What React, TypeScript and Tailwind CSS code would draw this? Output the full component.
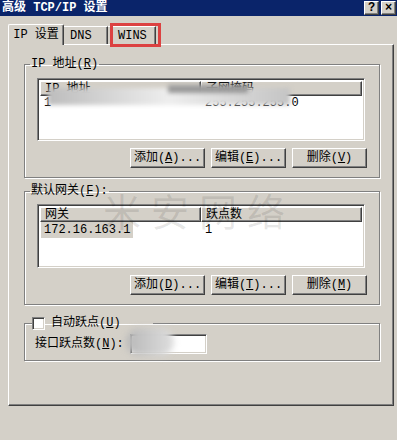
import React from 'react';

const raised =
  'border border-t-white border-l-white border-r-[#404040] border-b-[#404040] shadow-[inset_-1px_-1px_0_#808080]';
const sunken =
  'border border-t-[#808080] border-l-[#808080] border-r-white border-b-white shadow-[inset_1px_1px_0_#404040,inset_-1px_-1px_0_#d4d0c8]';
const etched = 'border border-[#808080] shadow-[inset_1px_1px_0_#ffffff,1px_1px_0_#ffffff]';

const Btn = ({ label, hot, dots }: { label: string; hot: string; dots?: boolean }) => (
  <button className={`${raised} w-[75px] h-[20px] bg-[#d4d0c8] flex items-center justify-center text-[12px] leading-none text-black`}>
    {label}(<span className="underline">{hot}</span>){dots ? '...' : ''}
  </button>
);

const HeaderCell = ({ children, grow }: { children: React.ReactNode; grow?: boolean }) => (
  <div className={`${raised} h-[15px] bg-[#d4d0c8] flex items-center pl-[4px] text-[12px] leading-none ${grow ? 'flex-1' : 'w-[161px]'}`}>
    {children}
  </div>
);

const App: React.FC = () => {
  return (
    <div className="relative w-[397px] h-[440px] overflow-hidden bg-[#d4d0c8] text-black font-['Liberation_Mono','Noto_Sans_CJK_SC',monospace]">
      {/* Title bar */}
      <div className="h-[16px] bg-[#0a246a] flex items-center justify-between pl-[2px] pr-[1px]">
        <span className="text-white font-bold text-[12px] leading-none">高级 TCP/IP 设置</span>
        <div className="flex gap-[2px]">
          <div className={`${raised} w-[15px] h-[14px] bg-[#d4d0c8] flex items-center justify-center text-[12px] font-bold leading-none`}>?</div>
          <div className={`${raised} w-[15px] h-[14px] bg-[#d4d0c8] flex items-center justify-center text-[12px] font-bold leading-none`}>×</div>
        </div>
      </div>

      {/* Tabs */}
      <div className="flex items-end pl-[8px] pt-[7px] h-[28px]">
        <div className="relative z-10 -mb-px h-[21px] w-[56px] bg-[#d4d0c8] border-t border-l border-t-white border-l-white border-r border-r-[#404040] shadow-[inset_-1px_0_0_#808080] rounded-t-[2px] flex items-center justify-center text-[12px] leading-none">
          IP 设置
        </div>
        <div className="h-[18px] w-[44px] border-t border-t-white border-r border-r-[#404040] shadow-[inset_-1px_0_0_#808080] flex items-center pl-[6px] text-[12px] leading-none">
          DNS
        </div>
        <div className="h-[18px] w-[48px] border-t border-t-white border-r border-r-[#404040] shadow-[inset_-1px_0_0_#808080] flex items-center pl-[10px] text-[12px] leading-none">
          WINS
        </div>
      </div>

      {/* Panel */}
      <div className={`${raised} ml-[8px] w-[386px] h-[362px] px-[15px]`}>
        {/* IP address group */}
        <fieldset className={`${etched} mt-[12px] w-[356px] p-0`}>
          <legend className="ml-[5px] px-[1px] h-[14px] text-[12px] leading-[14px]">
            IP 地址(<span className="underline">R</span>)
          </legend>
          <div className="pl-[12px] pr-[14px] pt-[7px] pb-[9px]">
            <div className={`${sunken} relative h-[63px] bg-white p-[2px]`}>
              <div className="flex">
                <HeaderCell>IP 地址</HeaderCell>
                <HeaderCell grow>子网掩码</HeaderCell>
              </div>
              <div className="flex h-[14px] items-center text-[12px] leading-none">
                <span className="w-[161px] pl-[4px]">1</span>
                <span className="pl-[4px]">255.255.255.0</span>
              </div>
              <div className="absolute left-[10px] top-[9px] w-[242px] h-[17px] bg-gradient-to-r from-[#bdbdbd] via-[#eeeeee] to-[#c4c4c4] blur-[2px]" />
              <div className="absolute left-[130px] top-[6px] w-[80px] h-[8px] bg-[#9a9a9a] blur-[2px]" />
            </div>
            <div className="mt-[7px] flex justify-end gap-[6px] -mr-[2px]">
              <Btn label="添加" hot="A" dots />
              <Btn label="编辑" hot="E" dots />
              <Btn label="删除" hot="V" />
            </div>
          </div>
        </fieldset>

        {/* Default gateway group */}
        <fieldset className={`${etched} mt-[6px] w-[356px] p-0`}>
          <legend className="ml-[5px] px-[1px] h-[14px] text-[12px] leading-[14px]">
            默认网关(<span className="underline">F</span>):
          </legend>
          <div className="pl-[12px] pr-[14px] pt-[6px] pb-[9px]">
            <div className={`${sunken} h-[64px] bg-white p-[2px]`}>
              <div className="flex">
                <HeaderCell>网关</HeaderCell>
                <HeaderCell grow>跃点数</HeaderCell>
              </div>
              <div className="flex h-[15px] items-center text-[12px] leading-none">
                <div className="w-[161px] pl-[1px]">
                  <span className="bg-[#d4d0c8] px-[3px] py-[1px]">172.16.163.1</span>
                </div>
                <span className="pl-[4px]">1</span>
              </div>
            </div>
            <div className="mt-[7px] flex justify-end gap-[6px] -mr-[2px]">
              <Btn label="添加" hot="D" dots />
              <Btn label="编辑" hot="T" dots />
              <Btn label="删除" hot="M" />
            </div>
          </div>
        </fieldset>

        {/* Metric group */}
        <fieldset className={`${etched} mt-[11px] w-[356px] p-0`}>
          <legend className="ml-[7px] h-[14px] w-[121px] flex items-center gap-[6px] text-[12px] leading-none">
            <span className={`${sunken} w-[13px] h-[13px] bg-white`} />
            <span>
              自动跃点(<span className="underline">U</span>)
            </span>
          </legend>
          <div className="flex items-center pl-[10px] pt-[4px] pb-[6px]">
            <span className="w-[95px] text-[12px] leading-none">
              接口跃点数(<span className="underline">N</span>):
            </span>
            <div className="relative">
              <div className={`${sunken} w-[77px] h-[20px] bg-white`} />
              <div className="absolute -left-[4px] -top-[6px] w-[48px] h-[28px] rounded-full bg-gradient-to-r from-[#b8b8b8] to-[#dedede] blur-[3px]" />
            </div>
          </div>
        </fieldset>
      </div>

      {/* Watermark */}
      <div className="pointer-events-none absolute left-[103px] top-[191px] flex gap-[10px] text-[38px] leading-none text-black/10 font-['Noto_Sans_CJK_SC',sans-serif]">
        <span>米</span>
        <span>安</span>
        <span>网</span>
        <span>络</span>
      </div>

      {/* Red annotation box */}
      <div className="pointer-events-none absolute left-[110px] top-[23px] w-[51px] h-[24px] border-[3px] border-[#dc4141]" />
    </div>
  );
};

export default App;
